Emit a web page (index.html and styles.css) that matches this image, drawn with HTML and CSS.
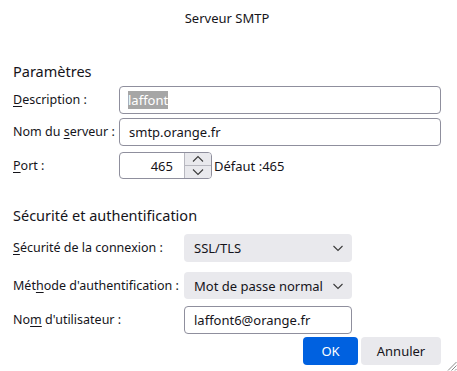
FILE: index.html
```html
<!DOCTYPE html>
<html lang="fr">
<head>
    <meta charset="UTF-8">
    <meta name="viewport" content="width=device-width, initial-scale=1.0">
    <title>Serveur SMTP</title>
    <link rel="stylesheet" href="styles.css">
</head>
<body>
    <div class="dialog">
        <div class="titre">Serveur SMTP</div>

        <h2 class="groupe">Paramètres</h2>
        <div class="ligne ligne-1">
            <label class="etiquette etroite" for="desc"><u>D</u>escription :</label>
            <div class="champ large"><span class="selection">laffont</span></div>
        </div>
        <div class="ligne ligne-2">
            <label class="etiquette etroite" for="serveur">Nom du <u>s</u>erveur :</label>
            <div class="champ large">smtp.orange.fr</div>
        </div>
        <div class="ligne ligne-3">
            <label class="etiquette etroite" for="port"><u>P</u>ort :</label>
            <div class="champ port">
                <span class="port-valeur">465</span>
                <div class="spin">
                    <div class="spin-btn">
                        <svg width="14" height="8" viewBox="0 0 14 8"><path d="M2 6.5 L7 1.5 L12 6.5" fill="none" stroke="#3a3a3a" stroke-width="1.1"/></svg>
                    </div>
                    <div class="spin-btn">
                        <svg width="14" height="8" viewBox="0 0 14 8"><path d="M2 1.5 L7 6.5 L12 1.5" fill="none" stroke="#3a3a3a" stroke-width="1.1"/></svg>
                    </div>
                </div>
            </div>
            <span class="defaut">Défaut :465</span>
        </div>

        <h2 class="groupe groupe-2">Sécurité et authentification</h2>
        <div class="ligne ligne-4">
            <label class="etiquette moyenne"><u>S</u>écurité de la connexion :</label>
            <div class="liste">SSL/TLS
                <svg class="chevron" width="12" height="8" viewBox="0 0 12 8"><path d="M1.5 2 L6 6.5 L10.5 2" fill="none" stroke="#3a3a3a" stroke-width="1.1"/></svg>
            </div>
        </div>
        <div class="ligne ligne-5">
            <label class="etiquette moyenne">Mét<u>h</u>ode d'authentification :</label>
            <div class="liste">Mot de passe normal
                <svg class="chevron" width="12" height="8" viewBox="0 0 12 8"><path d="M1.5 2 L6 6.5 L10.5 2" fill="none" stroke="#3a3a3a" stroke-width="1.1"/></svg>
            </div>
        </div>
        <div class="ligne ligne-6">
            <label class="etiquette moyenne">No<u>m</u> d'utilisateur :</label>
            <div class="champ court">laffont6@orange.fr</div>
        </div>

        <div class="boutons">
            <button class="btn btn-ok">OK</button>
            <button class="btn">Annuler</button>
        </div>

        <svg class="poignee" width="10" height="10" viewBox="0 0 10 10">
            <path d="M9.5 1 L1 9.5 M9.5 4.5 L4.5 9.5 M9.5 8 L8 9.5" stroke="#8a8a8a" stroke-width="1"/>
        </svg>
    </div>
</body>
</html>
```

FILE: styles.css
```css
html, body {
    margin: 0;
    background: #ffffff;
}
body {
    font-family: "Noto Sans", "Open Sans", sans-serif;
    font-size: 12.5px;
    color: #15141a;
}
.dialog {
    position: relative;
    height: 371px;
    padding: 0 16px 0 13px;
    box-sizing: border-box;
}
.titre {
    text-align: center;
    padding-top: 9px;
    height: 18px;
    line-height: 18px;
    font-size: 13px;
}
.groupe {
    margin: 34px 0 0 0;
    font-size: 14.5px;
    font-weight: normal;
    line-height: 20px;
    height: 20px;
}
.groupe-2 {
    margin-top: 26px;
}
.ligne {
    display: flex;
    align-items: center;
    height: 28px;
}
.ligne-1 { margin-top: 5px; }
.ligne-2 { margin-top: 4px; }
.ligne-3 { margin-top: 6px; height: 27px; }
.ligne-4 { margin-top: 9px; }
.ligne-5 { margin-top: 10px; height: 27px; }
.ligne-6 { margin-top: 7px; }
.etiquette {
    flex: none;
    line-height: 18px;
}
.etiquette u {
    text-underline-offset: 2px;
}
.etroite { width: 106px; }
.moyenne { width: 171px; }
.champ {
    box-sizing: border-box;
    height: 100%;
    border: 1px solid #8f8f9d;
    border-radius: 4px;
    display: flex;
    align-items: center;
    padding: 0 9px;
    font-size: 13px;
    background: #fff;
}
.large { width: 322px; }
.court { width: 168px; }
.selection {
    background: #a6a6a6;
    color: #ffffff;
    margin-left: -1px;
}
.port {
    width: 93px;
    padding: 0 0 0 0;
    justify-content: flex-end;
}
.port-valeur {
    margin-right: 11px;
}
.spin {
    display: flex;
    flex-direction: column;
    width: 27px;
    height: 100%;
    border-left: 1px solid #b8b8c0;
    box-sizing: border-box;
    border-radius: 0 3px 3px 0;
    overflow: hidden;
}
.spin-btn {
    flex: 1;
    background: #e9e9ed;
    display: flex;
    align-items: center;
    justify-content: center;
}
.spin-btn + .spin-btn {
    border-top: 1px solid #b8b8c0;
}
.defaut {
    margin-left: 2px;
    font-size: 13px;
}
.liste {
    box-sizing: border-box;
    width: 168px;
    height: 100%;
    background: #e9e9ed;
    border-radius: 4px;
    display: flex;
    align-items: center;
    justify-content: space-between;
    padding: 0 8px 0 10px;
    font-size: 13px;
}
.boutons {
    display: flex;
    justify-content: flex-end;
    gap: 3px;
    margin-top: 3px;
}
.btn {
    height: 28px;
    border: none;
    border-radius: 4px;
    font-family: inherit;
    font-size: 13px;
    background: #e9e9ed;
    color: #15141a;
    padding: 0;
    width: 80px;
}
.btn-ok {
    background: #0061e0;
    color: #ffffff;
    width: 55px;
}
.poignee {
    position: absolute;
    right: 0;
    bottom: 0;
}
```
